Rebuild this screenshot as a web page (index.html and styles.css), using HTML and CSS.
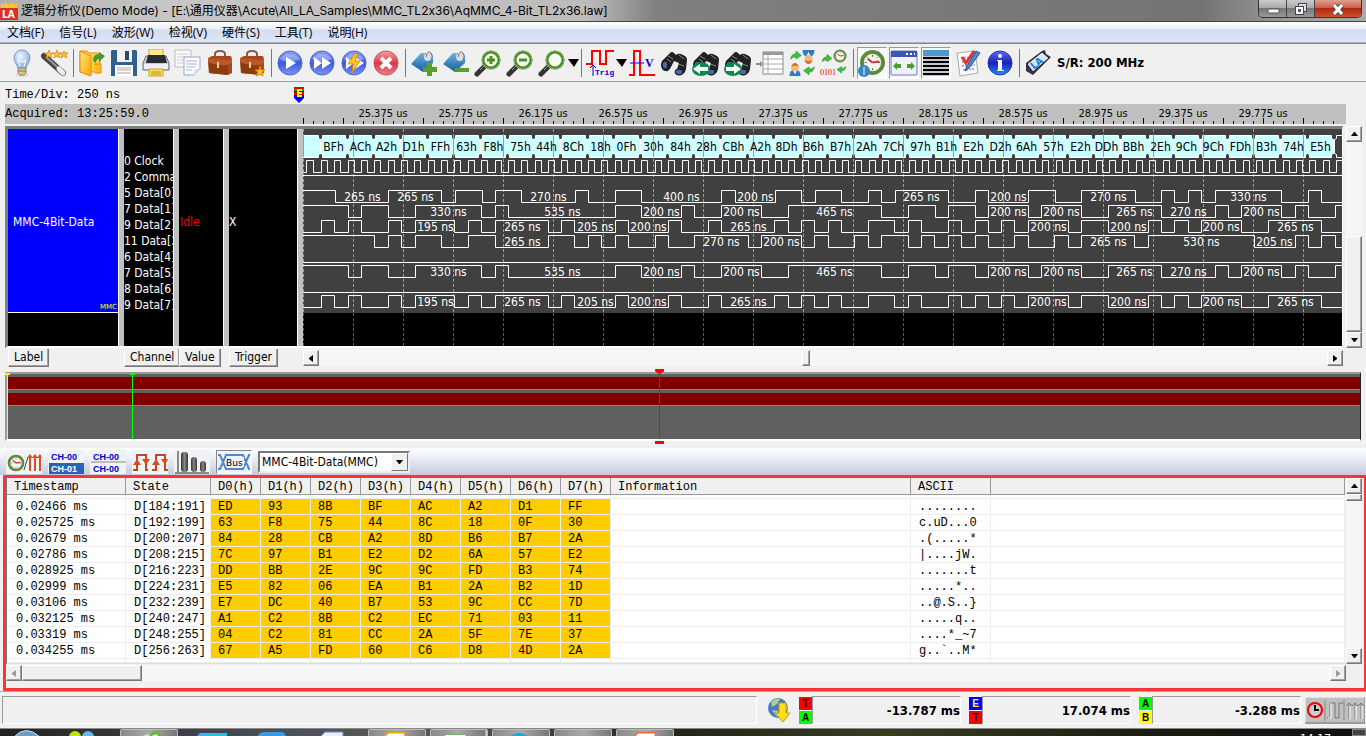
FILE: index.html
```html
<!DOCTYPE html>
<html lang="zh-CN">
<head>
<meta charset="utf-8">
<title>逻辑分析仪(Demo Mode)</title>
<link rel="stylesheet" href="styles.css">
</head>
<body>
<svg class="defs" aria-hidden="true">
  <defs>
    <linearGradient id="gBlue" x1="0" y1="0" x2="0" y2="1"><stop offset="0" stop-color="#8fa6f0"/><stop offset=".5" stop-color="#3b5be0"/><stop offset="1" stop-color="#7d95f5"/></linearGradient>
    <linearGradient id="gRed" x1="0" y1="0" x2="0" y2="1"><stop offset="0" stop-color="#f0a0a0"/><stop offset=".5" stop-color="#dc3a48"/><stop offset="1" stop-color="#ee7f88"/></linearGradient>
    <linearGradient id="gInfo" x1="0" y1="0" x2="0" y2="1"><stop offset="0" stop-color="#5a6cf0"/><stop offset=".5" stop-color="#1a22b8"/><stop offset="1" stop-color="#2a8cf0"/></linearGradient>
    <linearGradient id="gTag" x1="0" y1="0" x2="0" y2="1"><stop offset="0" stop-color="#6cb2e4"/><stop offset="1" stop-color="#145c9c"/></linearGradient>
    <linearGradient id="gGold" x1="0" y1="0" x2="1" y2="1"><stop offset="0" stop-color="#ffe680"/><stop offset="1" stop-color="#f5a800"/></linearGradient>
    <linearGradient id="gBar" x1="0" y1="0" x2="1" y2="0"><stop offset="0" stop-color="#333"/><stop offset=".5" stop-color="#888"/><stop offset="1" stop-color="#333"/></linearGradient>
    <radialGradient id="gBulb" cx=".4" cy=".35" r=".7"><stop offset="0" stop-color="#f4faff"/><stop offset="1" stop-color="#7fa8dc"/></radialGradient>
    <symbol id="ball" viewBox="0 0 28 28"><circle cx="14" cy="14" r="12" fill="url(#gBlue)" stroke="#4a62d8"/><path d="M4 10a11 8 0 0 1 20 0q-10 5-20 0z" fill="#fff" opacity=".3"/></symbol>
    <symbol id="case" viewBox="0 0 28 28"><path d="M9 8V5q0-3 5-3t5 3v3" fill="none" stroke="#8a5a40" stroke-width="2"/><path d="M2 9l4-2h19l1 3v14l-4 2L3 24z" fill="#a64a1c"/><path d="M2 9l20 2v15L3 24z" fill="#8e3b12"/><path d="M2 9l20 2 4-1v4q-5 3-12 2Q6 15 2 13z" fill="#b85a26"/><path d="M12 13v6" stroke="#f0d0a0" stroke-width="2"/></symbol>
    <symbol id="lens" viewBox="0 0 28 28"><path d="M11 17L3 25" stroke="#333" stroke-width="5" stroke-linecap="round"/><path d="M11 16l-5 5" stroke="#999" stroke-width="1"/><circle cx="17" cy="11" r="8" fill="#f6faf4" stroke="#4d8a2a" stroke-width="3"/><circle cx="17" cy="11" r="9" fill="none" stroke="#88b868" stroke-width="1"/></symbol>
    <symbol id="bino" viewBox="0 0 28 28"><path d="M1 15q0-3 3-5l6-6q2-2 4 0l2 2q2-2 5-1l4 2q2 1 2 4l-1 9q-1 5-5 6-5 1-5-3l2-6 1-3-5-2-3 6q-2 5-6 4-4-1-4-7z" fill="#222"/><path d="M8 7l5 3M19 6l5 4M7 10l4 3M18 15l6 2" stroke="#888" stroke-width="1"/><ellipse cx="5" cy="16" rx="3" ry="4" fill="#4668a8" stroke="#111"/><ellipse cx="19" cy="23" rx="4" ry="3" fill="#4668a8" stroke="#111"/></symbol>
    <symbol id="clock" viewBox="0 0 28 28"><circle cx="14" cy="14" r="11" fill="#f4f4ee" stroke="#5c8a3a" stroke-width="4"/><path d="M14 6v2M14 20v2M6 14h2M20 14h2M8 8l1 1M20 8l-1 1M8 20l1-1" stroke="#555"/><path d="M14 14l-5-4M14 14l7-1" stroke="#c33" stroke-width="2"/></symbol>
    <symbol id="swapA" viewBox="0 0 12 10"><path d="M0 9Q1 3 6 3V0l6 5-6 4V7Q3 6 0 9z" fill="#3cc03c" stroke="#28882a" stroke-width=".6"/></symbol>
    <symbol id="man" viewBox="0 0 12 14"><path d="M0 14q0-7 6-7t6 7z" fill="#3478cc"/><path d="M4 8l2 4 2-4z" fill="#fff"/><circle cx="6" cy="5" r="4" fill="#fbb878"/><path d="M2 4q1-4 4-4t4 4q-4-2-8 0z" fill="#d07820"/></symbol>
  </defs>
</svg>

<header class="titlebar">
  <svg class="logo" viewBox="0 0 18 18"><path d="M1 1l3 2 2-3 3 3 3-3 2 3 3-2v15H1z" fill="#ffc430"/><rect x="0" y="6" width="18" height="12" fill="#d83228"/><text x="2" y="16" class="logo-text">LA</text></svg>
  <h1>逻辑分析仪(Demo Mode) - [E:\通用仪器\Acute\All_LA_Samples\MMC_TL2x36\AqMMC_4-Bit_TL2x36.law]</h1>
  <div class="wincontrols">
    <button aria-label="Minimize"><svg width="14" height="14"><rect x="2" y="7" width="11" height="4" rx="1" fill="#fff" stroke="#555"/></svg></button>
    <button aria-label="Restore"><svg width="14" height="14"><rect x="4.500" y="1.500" width="8" height="8" fill="#ddd" stroke="#445"/><rect x="1.500" y="4.500" width="8" height="8" fill="#fff" stroke="#445"/><rect x="4" y="7" width="3" height="3" fill="#556"/></svg></button>
    <button class="close" aria-label="Close"><svg width="14" height="14"><path d="M3 3l8 9M11 3l-8 9" stroke="#555" stroke-width="5"/><path d="M3 3l8 9M11 3l-8 9" stroke="#fff" stroke-width="3"/></svg></button>
  </div>
</header>

<nav class="menubar"><button>文档(F)</button><button>信号(L)</button><button>波形(W)</button><button>检视(V)</button><button>硬件(S)</button><button>工具(T)</button><button>说明(H)</button></nav>

<div class="toolbar" role="toolbar">
  <button aria-label="Tip"><svg viewBox="0 0 28 28"><ellipse cx="14" cy="26" rx="7" ry="2" fill="#ddd"/><path d="M14 1a8 8 0 0 1 8 8c0 4-3 6-4 10h-8C9 15 6 13 6 9a8 8 0 0 1 8-8z" fill="url(#gBulb)" stroke="#7a9ccc"/><path d="M12 18l-2-7 4 2 4-2-2 7" fill="none" stroke="#fff"/><path d="M10 19h8v5l-2 2h-4l-2-2z" fill="#d8cc80" stroke="#888860"/><path d="M10 22h8" stroke="#777"/></svg></button>
  <button aria-label="Wizard"><svg viewBox="0 0 28 28"><path d="M4 7l19 17" stroke="#444" stroke-width="6" stroke-linecap="round"/><path d="M6 8l17 15" stroke="#999" stroke-width="2"/><path d="M19 20l4 4" stroke="#eee" stroke-width="5" stroke-linecap="round"/><path d="M9 1l1 3 3 0-2 2 1 3-3-2-3 2 1-3-3-2 4 0zM17 1l1 3 3 0-2 2 1 3-3-2-3 2 1-3-2-2 3 0zM24 2l1 2 3 0-2 2 1 3-3-2-3 2 1-3-2-2 3 0z" fill="#ffc820" stroke="#e07818" stroke-width=".7"/></svg></button>
  <span class="sep"></span>
  <button aria-label="Open"><svg viewBox="0 0 28 28"><path d="M2 2h7l2 2h11v19H2z" fill="#ffd040" stroke="#e89010"/><path d="M2 2l11 5v20L2 23z" fill="url(#gGold)" stroke="#e08c10"/><path d="M15 12q0-7 6-7V3l6 4-6 6v-3q-3 0-3 4z" fill="#489438"/><path d="M16 15h7v9h-6" fill="#ffb820" stroke="#e08c10"/></svg></button>
  <button aria-label="Save"><svg viewBox="0 0 28 28"><path d="M2 1h24l1 1v25H1V2z" fill="#315f8e"/><rect x="7" y="1" width="15" height="12" fill="#f0f2f4"/><rect x="15" y="2" width="4" height="9" fill="#244a72"/><rect x="5" y="16" width="18" height="11" fill="#fff"/><path d="M7 19h14M7 21h14M7 24h14" stroke="#aaa"/></svg></button>
  <button aria-label="Print"><svg viewBox="0 0 28 28"><rect x="7" y="0" width="14" height="7" fill="#ffe890" stroke="#c8a030"/><path d="M4 7h20l3 7v7H1v-7z" fill="#c8ccd4" stroke="#6a7078"/><path d="M6 6h17l2 8H4z" fill="#2c2c30"/><path d="M2 15h24v5H2z" fill="#eef"/><path d="M7 20h14v7H7z" fill="#ffe060" stroke="#d0a020"/><path d="M9 23h10M9 25h10" stroke="#b89020"/></svg></button>
  <button aria-label="Copy"><svg viewBox="0 0 28 28"><path d="M1 1h16v17H1z" fill="#fafafa" stroke="#bbb"/><path d="M3 5h12M3 8h12M3 11h12M3 14h12" stroke="#ccc"/><path d="M10 8h16v12l-6 6H10z" fill="#fbfcff" stroke="#9aa6c4"/><path d="M12 12h11M12 15h11M12 18h9M12 21h6" stroke="#a8b4d4"/><path d="M20 26l1-6h5z" fill="#dde"/></svg></button>
  <button aria-label="Project"><svg><use href="#case"/></svg></button>
  <button aria-label="New project"><svg viewBox="0 0 28 28"><use href="#case"/><path d="M22 17l1 4h4l-3 2 1 4-3-2-4 2 2-4-3-2h4z" fill="#ffc820" stroke="#d88810"/></svg></button>
  <span class="sep"></span>
  <button aria-label="Run"><svg viewBox="0 0 28 28"><use href="#ball"/><path d="M10 8l10 6-10 6z" fill="#fff"/></svg></button>
  <button aria-label="Repeat run"><svg viewBox="0 0 28 28"><use href="#ball"/><path d="M6 8l8 6-8 6zM14 8l9 6-9 6z" fill="#fff"/></svg></button>
  <button aria-label="Quick run"><svg viewBox="0 0 28 28"><use href="#ball"/><path d="M6 8l8 6-8 6zM15 8l9 6-9 6z" fill="#fff"/><path d="M15 4l-7 11h5l-1 9 8-12h-5l3-7z" fill="#ffc41c" stroke="#c07800" stroke-width=".7"/></svg></button>
  <button aria-label="Stop"><svg viewBox="0 0 28 28"><circle cx="14" cy="14" r="12" fill="url(#gRed)" stroke="#c85060"/><path d="M9 9l10 10M19 9L9 19" stroke="#fff" stroke-width="4"/></svg></button>
  <span class="sep"></span>
  <button aria-label="Add tag"><svg viewBox="0 0 28 28"><path d="M1 15L11 4h10l2 3v7L13 23z" fill="url(#gTag)"/><circle cx="18" cy="8" r="4" fill="#ddd"/><path d="M16 8q2-8 5-4t-2 9" fill="none" stroke="#778"/><path d="M17 14h5v4h5v5h-5v4h-5v-4h-4v-5h4z" fill="#58a028"/></svg></button>
  <button aria-label="Remove tag"><svg viewBox="0 0 28 28"><path d="M1 15L11 4h10l2 3v7L13 23z" fill="url(#gTag)"/><circle cx="18" cy="8" r="4" fill="#ddd"/><path d="M16 8q2-8 5-4t-2 9" fill="none" stroke="#778"/><path d="M13 19h14v4H13z" fill="#58a028"/></svg></button>
  <button aria-label="Zoom in"><svg viewBox="0 0 28 28"><use href="#lens"/><path d="M13 11h8M17 7v8" stroke="#4d9020" stroke-width="3"/></svg></button>
  <button aria-label="Zoom out"><svg viewBox="0 0 28 28"><use href="#lens"/><path d="M13 11h8" stroke="#4d9020" stroke-width="3"/></svg></button>
  <button aria-label="Zoom"><svg viewBox="0 0 28 28"><use href="#lens"/></svg></button>
  <button class="drop" aria-label="Zoom options"><svg viewBox="0 0 11 8"><path d="M0 0h11L6 8z"/></svg></button>
  <span class="sep"></span>
  <button aria-label="Trigger"><svg viewBox="0 0 28 28"><path d="M0 15h6V2h8v13h6V2h8" fill="none" stroke="#f00" stroke-width="2"/><path d="M7 27V16M4 19l3-3 3 3" fill="none" stroke="#00d" stroke-width="1"/><text x="9" y="26" class="trig">Trig</text></svg></button>
  <button class="drop" aria-label="Trigger options"><svg viewBox="0 0 11 8"><path d="M0 0h11L6 8z"/></svg></button>
  <button aria-label="Voltage"><svg viewBox="0 0 28 28"><path d="M1 26h5V2h6v24h15" fill="none" stroke="#f00" stroke-width="2"/><path d="M2 14h14" stroke="#00e" stroke-width="1"/><text x="17" y="18" class="volt">V</text></svg></button>
  <button aria-label="Find"><svg><use href="#bino"/></svg></button>
  <button aria-label="Find previous"><svg viewBox="0 0 28 28"><use href="#bino"/><ellipse cx="9" cy="20" rx="9" ry="7" fill="#0a8a4c"/><path d="M1 20l7-5v3h8v4H8v3z" fill="#fff"/></svg></button>
  <button aria-label="Find next"><svg viewBox="0 0 28 28"><use href="#bino"/><ellipse cx="9" cy="20" rx="9" ry="7" fill="#0a8a4c"/><path d="M17 20l-7-5v3H2v4h8v3z" fill="#fff"/></svg></button>
  <button aria-label="Report list"><svg viewBox="0 0 28 28"><rect x="7" y="3" width="20" height="22" fill="#fff" stroke="#888"/><rect x="7" y="3" width="20" height="3" fill="#999"/><path d="M12 6v19M7 10h20M7 15h20M7 20h20" stroke="#aaa" stroke-width="1"/><path d="M0 14h4v-2l3 3-3 3v-2H0z" fill="#888"/></svg></button>
  <button aria-label="Swap channels"><svg viewBox="0 0 28 28"><use href="#man" x="14" y="1" width="13" height="14" transform="rotate(180 20.500 8)"/><use href="#man" x="1" y="14" width="12" height="13"/><use href="#swapA" x="2" y="2" width="12" height="9"/><use href="#swapA" x="15" y="18" width="12" height="9" transform="rotate(180 21 22)"/></svg></button>
  <button aria-label="Swap data"><svg viewBox="0 0 28 28"><use href="#clock" x="13" y="0" width="14" height="14"/><use href="#swapA" x="2" y="5" width="10" height="9"/><use href="#swapA" x="18" y="17" width="9" height="9" transform="rotate(180 22 21)"/><text x="0" y="26" class="bits">0101</text></svg></button>
  <span class="sep"></span>
  <button class="pressed" aria-label="Clock"><svg viewBox="0 0 28 28"><use href="#clock" x="1" y="0" width="27" height="27"/><circle cx="6" cy="22" r="6" fill="#3488c8"/><path d="M6 18v8" stroke="#fff"/></svg></button>
  <button class="pressed" aria-label="Fit window"><svg viewBox="0 0 28 28"><rect x="1" y="2" width="26" height="24" rx="1" fill="#eef0fa" stroke="#6878c8"/><path d="M1 2h26v6H1z" fill="#3c55b8"/><path d="M16 5h2M20 5h2M24 5h1" stroke="#fff" stroke-width="2"/><path d="M3 17l4-4v2h4v4H7v2zM25 17l-4-4v2h-4v4h4v2z" fill="#4c9c30"/></svg></button>
  <button class="pressed" aria-label="Lines"><svg viewBox="0 0 28 28"><rect x="1" y="1" width="26" height="26" fill="#c4c8cc"/><rect x="1" y="1" width="26" height="6" fill="#4d96d0"/><path d="M1 9h26M1 13h26M1 17h26M1 21h26M1 25h26" stroke="#000" stroke-width="2"/></svg></button>
  <button aria-label="Check list"><svg viewBox="0 0 28 28"><path d="M3 4l18-2 3 22-18 3z" fill="#fafafa" stroke="#aaa"/><path d="M7 9l13-1M8 13l12-1M8 17l13-1M9 21l12-1" stroke="#aac" stroke-width="2" stroke-dasharray="2 1"/><path d="M8 8l4 6 8-12" fill="none" stroke="#e03434" stroke-width="3"/><path d="M22 2L13 17l-2 5 4-3L26 4z" fill="#4a8cd0" stroke="#245090"/></svg></button>
  <button aria-label="About"><svg viewBox="0 0 28 28"><circle cx="14" cy="14" r="12" fill="url(#gInfo)" stroke="#2634b0"/><circle cx="14" cy="7" r="2" fill="#fff"/><path d="M11 11h5v10h2v1h-7v-1h1v-9h-1z" fill="#fff"/></svg></button>
  <span class="sep"></span>
  <svg class="device" viewBox="0 0 28 28"><path d="M2 14L18 2l3-1 1 4 5 3L9 26l-7-4z" fill="#334"/><path d="M3 15L18 3l7 6L9 23z" fill="#d4e8fa" stroke="#223"/><text x="6" y="18" class="la" transform="rotate(-38 12 14)">LA</text></svg>
  <strong class="rate">S/R: 200 MHz</strong>
</div>

<main>
  <section class="timehead">
    <p class="timediv">Time/Div: 250 ns
      <svg class="flag" viewBox="0 0 12 16"><path d="M1 0h10v11l-5 5-5-5z" fill="#00f"/><path d="M1 0h10v2H1z" fill="#e00"/><path d="M1 2h10v2H1z" fill="#0a0"/><path d="M1 5h10v3H1z" fill="#e00"/><path d="M4 2h5v2H6v1h3v2H6v1h3v2H4z" fill="#ff0"/></svg>
    </p>
    <div class="ruler"><span>Acquired: 13:25:59.0</span><svg id="ruler"></svg></div>
  </section>

  <section class="viewer">
    <div class="panel">
      <div class="col label"><span>MMC-4Bit-Data</span><small>MMC</small></div>
      <div class="col channel"><ul><li>0 Clock</li><li>2 Command</li><li>5 Data[0]</li><li>7 Data[1]</li><li>9 Data[2]</li><li>11 Data[3]</li><li>6 Data[4]</li><li>7 Data[5]</li><li>8 Data[6]</li><li>9 Data[7]</li></ul></div>
      <div class="col value">Idle</div>
      <div class="col trigger">X</div>
      <svg id="wave"></svg>
    </div>
    <div class="scroll vertical">
      <button aria-label="Scroll up"><svg viewBox="0 0 7 4"><path d="M0 4h7L4 0H3z"/></svg></button><span class="track lead"></span><span class="thumb tall"></span>
      <button aria-label="Scroll down"><svg viewBox="0 0 7 4"><path d="M0 0h7L4 4H3z"/></svg></button>
    </div>
  </section>

  <section class="footer-row">
    <button>Label</button><button>Channel</button><button>Value</button><button>Trigger</button>
    <div class="scroll horizontal">
      <button aria-label="Scroll left"><svg viewBox="0 0 4 7"><path d="M4 0v7L0 4V3z"/></svg></button><span class="track"></span><span class="thumb small"></span><span class="track after"></span>
      <button aria-label="Scroll right"><svg viewBox="0 0 4 7"><path d="M0 0v7L4 4V3z"/></svg></button>
    </div>
  </section>

  <section class="overview">
    <div class="strip"></div><div class="strip"></div>
    <i class="cursor yellow"></i><i class="cursor green"></i><i class="cursor red"></i>
  </section>
</main>

<div class="bustools" role="toolbar">
  <button aria-label="Sample clock"><svg width="36" height="24"><use href="#clock" x="1" y="4" width="18" height="18"/><path d="M18 20l4-13" stroke="#444"/><path d="M24 21V5M29 21V5M34 21V5" stroke="#d85020" stroke-width="2"/><path d="M21 8l3-4 3 4zM26 8l3-4 3 4zM31 8l3-4 2 4z" fill="#d85020"/></svg></button>
  <button aria-label="Channel compare"><svg width="36" height="24"><rect x="1" y="13" width="35" height="11" fill="#2c62b4"/><text x="3" y="10" class="ch">CH-00</text><text x="3" y="22" class="ch inv">CH-01</text></svg></button>
  <button aria-label="Channel pair"><svg width="36" height="24"><path d="M1 12h35" stroke="#888"/><text x="3" y="10" class="ch">CH-00</text><text x="3" y="22" class="ch">CH-00</text></svg></button>
  <button aria-label="Edges"><svg width="36" height="24"><path d="M1 20h4V5h9v15h2M20 20h4V5h9v15h3" fill="none" stroke="#c84420" stroke-width="2"/><path d="M1 15l4-6 4 6zM10 9l4 6 4-6zM20 15l4-6 4 6zM29 9l4 6 3-6z" fill="#d84c24"/></svg></button>
  <button aria-label="Statistics"><svg width="36" height="24"><path d="M4 1v22M1 23h34" stroke="#888" stroke-width="2"/><rect x="7" y="2" width="7" height="20" rx="3" fill="url(#gBar)"/><rect x="17" y="7" width="6" height="15" rx="3" fill="url(#gBar)"/><rect x="26" y="11" width="6" height="11" rx="3" fill="url(#gBar)"/></svg></button>
  <button class="on" aria-label="Bus"><svg width="34" height="22"><path d="M1 4h2l6 14h17l6-14h1M1 18h2L9 4h17l6 14h1" fill="none" stroke="#4c88d0" stroke-width="2"/><rect x="9" y="6" width="18" height="10" fill="#f0f2f6"/><text x="9" y="15" class="bus">Bus</text></svg></button>
  <label class="combo"><select aria-label="Bus source"><option>MMC-4Bit-Data(MMC)</option></select><span><svg viewBox="0 0 7 4"><path d="M0 0h7L4 4H3z"/></svg></span></label>
</div>

<section class="report">
  <div class="report-main">
    <div class="tablewrap">
      <table>
        <colgroup><col class="w119"><col class="w85"><col class="w50"><col class="w50"><col class="w50"><col class="w50"><col class="w50"><col class="w50"><col class="w50"><col class="w50"><col class="w300"><col class="w80"><col></colgroup>
        <thead><tr><th>Timestamp</th><th>State</th><th>D0(h)</th><th>D1(h)</th><th>D2(h)</th><th>D3(h)</th><th>D4(h)</th><th>D5(h)</th><th>D6(h)</th><th>D7(h)</th><th>Information</th><th>ASCII</th><th></th></tr></thead>
        <tbody id="rows"></tbody>
      </table>
    </div>
    <div class="scroll vertical">
      <button aria-label="Scroll up"><svg viewBox="0 0 7 4"><path d="M0 4h7L4 0H3z"/></svg></button><span class="thumb tiny"></span><span class="track"></span>
      <button aria-label="Scroll down"><svg viewBox="0 0 7 4"><path d="M0 0h7L4 4H3z"/></svg></button>
    </div>
  </div>
  <div class="scroll horizontal off">
    <button aria-label="Scroll left"><svg viewBox="0 0 4 7"><path d="M4 0v7L0 4V3z"/></svg></button><span class="thumb wide"></span><span class="track"></span>
    <button aria-label="Scroll right"><svg viewBox="0 0 4 7"><path d="M0 0v7L4 4V3z"/></svg></button>
  </div>
</section>

<footer class="status">
  <div class="pane grow"></div>
  <svg class="globe" viewBox="0 0 24 26"><circle cx="10" cy="11" r="10" fill="#4a78c8"/><path d="M3 5q5-5 9-3l-3 5-5 3zM12 6q6-1 8 5l-5 6zM4 13l6 1-1 6z" fill="#a8d488"/><path d="M11 6h7v10h4l-7 9-8-9h4z" fill="#ffdf18" stroke="#c89810"/></svg>
  <div class="tags"><b class="r">T</b><b class="g">A</b></div><div class="pane num">-13.787 ms</div>
  <div class="tags"><b class="b">E</b><b class="r">T</b></div><div class="pane num">17.074 ms</div>
  <div class="tags"><b class="g">A</b><b class="y">B</b></div><div class="pane num">-3.288 ms</div>
  <svg class="modes" viewBox="0 0 60 27"><path d="M0 0h60v27H0z" fill="#c0c0c0"/><path d="M0 27V0h60" fill="none" stroke="#fff"/><path d="M0 26h60V0" fill="none" stroke="#777"/><circle cx="10" cy="13" r="7" fill="#ccc" stroke="#e00" stroke-width="2"/><path d="M10 8v5h4" fill="none" stroke="#000" stroke-width="2"/><path d="M20 3v21M39 3v21" stroke="#888"/><path d="M22 21h3V6h5v15h4V6h4" fill="none" stroke="#777"/><path d="M23 21h3V6" fill="none" stroke="#fff"/><path d="M44 22V7M50 22V7M56 22V7M41 9l3-3 3 3 3-3 3 3 3-3 3 3" fill="none" stroke="#777"/><path d="M45 22V9M51 22V9M57 22V9" stroke="#fff"/></svg>
</footer>

<div class="taskbar">
  <svg class="orb" viewBox="0 0 32 8"><path d="M2 8Q14-5 28 8z" fill="#6ca0c0" stroke="#cde"/></svg>
  <svg class="task plain" viewBox="0 0 58 8"><circle cx="17" cy="8" r="6" fill="#c4e000"/><circle cx="30" cy="8" r="6" fill="#6cb4e8"/></svg>
  <svg class="task lit" viewBox="0 0 58 8"><path d="M19 8q6-4 20-4v4z" fill="#ddd"/><path d="M30 7q6-7 12-1" fill="none" stroke="#5cc030" stroke-width="3"/></svg>
  <svg class="task plain" viewBox="0 0 58 8"><path d="M14 8l4-4h27v4z" fill="#30b8f0"/></svg>
  <svg class="task plain" viewBox="0 0 58 8"><path d="M13 8q2-5 8-5h16q4 0 5 5z" fill="#3c98e8"/></svg>
  <svg class="task plain" viewBox="0 0 58 8"><path d="M14 8l5-5h18v5z" fill="#eef" stroke="#6888c0"/></svg>
  <svg class="task lit" viewBox="0 0 54 8"><path d="M12 8l5-5h19v5z" fill="#fff" stroke="#f0a000" stroke-width="2"/></svg>
  <svg class="task lit dbl" viewBox="0 0 54 8"><path d="M12 8V5h24v3z" fill="#fff" stroke="#68a858"/></svg>
  <svg class="task lit" viewBox="0 0 54 8"><path d="M14 8q8-8 20-2v2z" fill="#18a8e0"/></svg>
  <svg class="task lit" viewBox="0 0 54 8"><path d="M21 8V7h14v1z" fill="#d8b060"/></svg>
  <svg class="task lit" viewBox="0 0 54 8"><path d="M14 8l5-5h20v5z" fill="#fff" stroke="#e87040" stroke-width="2"/></svg>
  <span class="tray"></span><time>14:17</time><span class="peek"></span>
</div>
<script src="app.js"></script>
</body>
</html>
```

FILE: styles.css
```css
:root {
  --ui: "DejaVu Sans Condensed", "Noto Sans", "Noto Sans CJK SC", sans-serif;
  --cn: "Open Sans", "Noto Sans CJK SC", sans-serif;
  --mono: "Liberation Mono", "Courier New", monospace;
  --face: #f0f0f0;
}
* { box-sizing: border-box; }
body { margin: 0; height: 100vh; overflow: hidden; display: flex; flex-direction: column; background: var(--face); font: 12px/16px var(--ui); color: #000; }
button { font: inherit; color: inherit; padding: 0; border: 0; background: none; }
h1, p, ul { margin: 0; padding: 0; }
svg { display: block; }
.defs { position: absolute; width: 0; height: 0; }

.titlebar { flex: none; height: 22px; display: flex; align-items: center; border-bottom: 1px solid #444; background: linear-gradient(90deg, #b0b0b0, #c6c6c6 12%, #bcbcbc 43%, #808080 48%, #747474 88%, #999 94%, #aaa); }
.logo { width: 18px; height: 18px; }
.logo-text { font: bold 10px var(--ui); fill: #fff; }
.titlebar h1 { flex: 1; padding-left: 3px; font: 12px/20px Inter, "Noto Sans CJK SC", sans-serif; font-feature-settings: "calt" 0; white-space: nowrap; }
.wincontrols { align-self: flex-start; display: flex; height: 18px; margin-right: 4px; border: 1px solid #333; border-top: 0; border-radius: 0 0 5px 5px; overflow: hidden; }
.wincontrols button { width: 28px; display: grid; place-items: center; background: linear-gradient(#ccc, #aaa 45%, #777 50%, #999); border-right: 1px solid #444; }
.wincontrols .close { width: 46px; border: 0; background: linear-gradient(#e0a090, #cc6048 45%, #b02810 50%, #d05030); }

.menubar { flex: none; height: 21px; display: flex; gap: 15px; padding-left: 7px; border-bottom: 1px solid #a8b0c4; background: linear-gradient(#fff, #e8edf8 35%, #d5dcf0 40%, #dfe6f8); font: 12px/19px var(--cn); }

.toolbar { flex: none; height: 39px; display: flex; align-items: center; padding-left: 6px; border-top: 1px solid #888; border-bottom: 1px solid #999; }
.toolbar button { width: 32px; height: 32px; display: grid; place-items: center; }
.toolbar button svg, .device { width: 28px; height: 28px; }
.device { margin: 0 2px; }
.toolbar .drop { width: 10px; }
.toolbar .drop svg { width: 11px; height: 8px; }
.sep { width: 6px; height: 28px; display: flex; justify-content: center; }
.sep::before { content: ""; width: 1px; background: #777; }
.toolbar .pressed { width: 30px; margin: 0 1px; border: 1px solid #999; border-right-color: #fff; border-bottom-color: #fff; background: #f8f8f8; }
.rate { padding-left: 3px; font-size: 13px; }
.trig { font: bold 8px var(--mono); fill: #00d; }
.volt { font: bold 12px "Liberation Serif", serif; fill: #00d; }
.bits { font: 8px "Liberation Serif", serif; fill: #e00; }
.la { font: bold 10px var(--ui); fill: #1478d8; }

.timehead { font: 12px/16px var(--mono); padding: 4px 20px 0 5px; }
.timediv { position: relative; height: 18px; line-height: 18px; }
.flag { position: absolute; left: 288px; top: 1px; width: 12px; height: 16px; }
.ruler { display: flex; height: 20px; background: #c0c0c0; line-height: 20px; white-space: nowrap; }
.ruler span { flex: none; width: 298px; }
.ruler svg { flex: 1; min-width: 0; height: 20px; font: 11px var(--ui); }

.viewer { display: flex; gap: 3px; margin: 2px 4px 0 5px; height: 222px; }
.panel { flex: 1; min-width: 0; display: grid; grid-template-columns: 116px 55px 50px 74px 1fr; border: solid; border-width: 3px 1px 2px 3px; border-color: #808080 #fff #fff #808080; background: #000; color: #fff; }
.col { border-right: 5px solid #c0c0c0; box-shadow: inset -1px 0 #fff; overflow: hidden; min-width: 0; white-space: nowrap; }
.label { display: grid; align-content: start; }
.label span, .label small { grid-area: 1 / 1; height: 184px; }
.label span { padding-left: 5px; line-height: 186px; background: #00f; border-bottom: 1px solid #fff; margin-right: 1px; }
.label small { display: grid; place-content: end; padding: 0 2px 2px 0; font: 7px/7px "DejaVu Sans", sans-serif; color: #ff0; }
.channel ul { list-style: none; padding-top: 24px; margin-right: 1px; overflow: hidden; }
.value { line-height: 186px; padding-left: 1px; color: #e00; }
.trigger { line-height: 186px; }
#wave { width: 100%; height: 100%; min-width: 0; }
#wave .gray { fill: #404040; }
#wave .sig { fill: none; stroke: #fff; }
#wave .cell { fill: #cff; stroke: #fff; }
#wave text { text-anchor: middle; fill: #fff; }
#wave .bustext { fill: #000; }
#wave .grid { stroke-dasharray: 3 2; stroke: #48c0c0; }
#wave .grid.oncell { stroke: #d88080; }
#wave .grid.onblack { stroke: #008080; }
#ruler text { text-anchor: middle; }

.scroll { display: flex; }
.scroll.vertical { flex: none; width: 16px; flex-direction: column; }
.scroll.horizontal { height: 16px; min-width: 0; }
.scroll button { flex: none; width: 16px; height: 16px; display: grid; place-items: center; }
.scroll button, .thumb, .footer-row > button { background: var(--face); border: 1px solid; border-color: #fff #777 #777 #fff; box-shadow: -1px -1px #a0a0a0 inset; }
.scroll svg { width: 7px; height: 4px; }
.scroll.horizontal svg { width: 4px; height: 7px; }
.track { flex: 1; background: repeating-conic-gradient(#fff 0 25%, #eee 0 50%) 0 0 / 2px 2px; }
.track.lead { flex: none; height: 94px; }
.thumb { flex: none; }
.thumb.tall { flex: 1; }
.thumb.small { width: 8px; }
.thumb.tiny { height: 7px; }
.thumb.wide { width: 120px; }
.track.after { flex: 1.07; }
.scroll.off svg { fill: #999; }

.footer-row { display: grid; grid-template-columns: 116px 55px 50px 74px 1fr; align-items: center; height: 20px; padding: 0 23px 0 8px; }
.footer-row > button { justify-self: start; height: 18px; padding: 0 5px; border-top: 0; line-height: 17px; }

.overview { position: relative; display: flow-root; height: 69px; margin: 4px 5px 0; border: solid; border-width: 2px 1px 2px 2px; border-color: #999 #222 #fff #999; background: #606060; }
.strip { height: 13px; margin-top: 3px; margin-bottom: 2px; background: #800000; border-bottom: 1px solid #e06060; }
.cursor { position: absolute; top: -1px; bottom: 0; width: 1px; }
.cursor::before { content: ""; position: absolute; top: 0; left: -2px; width: 5px; height: 2px; background: inherit; }
.yellow { left: 0; background: #ff0; }
.green { left: 125px; background: #0f0; }
.red { left: 48.2%; background: #f00; }
.red::before { top: -4px; left: -4px; width: 9px; height: 5px; clip-path: polygon(0 0, 100% 0, 100% 50%, 55% 100%, 45% 100%, 0 50%); }
.red::after { content: ""; position: absolute; bottom: -5px; left: -4px; width: 9px; height: 3px; background: #f00; }

.bustools { flex: none; display: flex; align-items: center; gap: 6px; height: 27px; margin-top: 7px; padding-left: 6px; background: linear-gradient(#fcfdff, #eceff6 35%, #c4cae0); }
.bustools button { width: 36px; height: 24px; background: #f0f2f6; display: grid; place-items: center; }
.bustools .on { border: 1px solid #888; border-right-color: #fff; border-bottom-color: #fff; }
.ch { font: bold 9px "Liberation Sans", sans-serif; fill: #0000d8; }
.ch.inv { fill: #fff; }
.bus { font: 9px "DejaVu Sans", sans-serif; }
.combo { display: flex; width: 152px; height: 22px; border: 2px solid; border-color: #777 #eee #eee #777; background: #fff; }
.combo select { flex: 1; min-width: 0; appearance: none; border: 0; padding: 0 0 0 2px; background: none; font: inherit; color: #000; }
.combo span { width: 17px; display: grid; place-items: center; background: var(--face); border: 1px solid; border-color: #fff #777 #777 #fff; }
.combo svg { width: 7px; height: 4px; }

.report { flex: none; height: 216px; margin-left: 3px; border: 3px solid #f33; border-right-width: 2px; padding-right: 2px; }
.report-main { display: flex; gap: 1px; height: 186px; }
.tablewrap { flex: 1; min-width: 0; overflow: hidden; background: #fff; border-left: 1px solid #777; border-bottom: 1px solid #ddd; }
table { width: 100%; table-layout: fixed; border-collapse: separate; border-spacing: 0; font: 12px/14px var(--mono); }
.w119 { width: 119px; } .w85 { width: 85px; } .w50 { width: 50px; } .w300 { width: 300px; } .w80 { width: 80px; }
th { height: 17px; padding: 2px 0 0 7px; text-align: left; font-weight: normal; background: var(--face); border-right: 1px solid #999; border-bottom: 1px solid #999; }
td { height: 16px; padding: 1px 0 0 8px; border-right: 1px solid #eee; border-bottom: 1px solid #eee; white-space: nowrap; }
.gap td { height: 4px; }
td:first-child { padding-left: 9px; }
td.hex { padding-left: 7px; background: #fc0; }
.report > .horizontal { margin: 1px 16px 0 0; }

.status { flex: none; display: flex; align-items: center; height: 37px; padding: 0 1px 0 2px; border-top: 1px solid #aaa; }
.pane { height: 28px; border: 1px solid; border-color: #999 #fff #fff #999; }
.grow { flex: 1; }
.globe { width: 24px; height: 26px; margin: 0 7px 0 11px; }
.tags { width: 13px; display: grid; gap: 1px; }
.tags b { height: 13px; font: bold 10px/13px "Liberation Sans", sans-serif; text-align: center; }
.r { background: #f00; } .g { background: #0f0; } .y { background: #ff0; } .b { background: #00f; color: #ff0; }
.num { width: 149px; margin-right: 8px; font-weight: bold; font-size: 13px; line-height: 28px; text-align: right; }
.modes { width: 60px; height: 27px; margin-left: -4px; }

.taskbar { flex: 1; min-height: 8px; display: flex; overflow: hidden; border-top: 1px solid #888; background: linear-gradient(90deg, #222, #4a5058 20%, #585858 30%, #22261a 50%, #3a3c20 65%, #1a1a12 85%, #111); }
.taskbar svg { height: 8px; flex: none; }
.orb { width: 32px; margin: 0 14px 0 12px; }
.task { width: 58px; margin-right: 4px; }
.lit { border: 1px solid #bbb; border-bottom: 0; border-radius: 2px 2px 0 0; background: linear-gradient(90deg, #888, #aaa 50%, #777); }
.dbl { border-right-width: 3px; }
.tray { flex: 1; }
.taskbar time { width: 52px; color: #fff; line-height: 20px; }
.peek { width: 14px; border: 1px solid #888; background: #444; }
```

FILE: app.js
```js
const NS = 'http://www.w3.org/2000/svg';
function add(parent, name, attrs, text) {
  const el = document.createElementNS(NS, name);
  for (const k in attrs) el.setAttribute(k, attrs[k]);
  if (text) el.textContent = text;
  parent.appendChild(el);
  return el;
}

// Ruler: a tick every 10px, a long one every 40px, a label every 80px
const ruler = document.getElementById('ruler');
let ticks = '';
for (let i = 0; i <= 103; i++) ticks += `M${i * 10 + 0.5} 20v${i % 4 ? -3 : -6}`;
add(ruler, 'path', { d: ticks, stroke: '#000' });
for (let i = 0; i < 12; i++) add(ruler, 'text', { x: 80 + i * 80, y: 13 }, (25.375 + i * 0.4).toFixed(3) + ' us');

// Waveforms: edge times in thirds of a pixel
const ORIGIN = 9, END = 3126;
const px = t => Math.floor((t - ORIGIN) / 3) + 0.5;
const wave = document.getElementById('wave');
add(wave, 'rect', { class: 'gray', width: '100%', height: 184 });

const bytes = 'BF AC A2 D1 FF 63 F8 75 44 8C 18 0F 30 84 28 CB A2 8D B6 B7 2A 7C 97 B1 E2 D2 6A 57 E2 DD BB 2E 9C 9C FD B3 74 E5'.split(' ');
const cellAt = k => Math.floor(17.5 + k * 26.67) + 0.5;
function cell(a, b, cls) {
  add(wave, 'path', { class: cls, d: `M${a} 10.5L${a + 2} 9.5V6.5H${b - 2}V9.5L${b} 10.5V24.5L${b - 2} 25.5V28.5H${a + 2}V25.5L${a} 24.5z` });
}
cell(-4.5, cellAt(0), 'cell');
bytes.forEach((b, k) => cell(cellAt(k), cellAt(k + 1), 'cell'));
cell(cellAt(38) + 1, cellAt(39), 'sig');

function gridLine(y1, y2, cls) {
  for (let x = 0; x <= 1000; x += 50) add(wave, 'path', { class: 'grid ' + cls, d: `M${x + 0.5} ${y1}V${y2}` });
}
gridLine(0, 184, '');
gridLine(7, 28, 'oncell');
gridLine(184, 220, 'onblack');
bytes.forEach((b, k) => add(wave, 'text', { class: 'bustext', x: cellAt(k) + 13, y: 22 }, b + 'h'));

function signal(high, start, edges, labels) {
  const hi = high - 129 + 0.5, lo = hi + 12;
  let level = start, d = `M0 ${level ? hi : lo}`;
  edges.forEach(e => { level = !level; d += `H${px(e)}V${level ? hi : lo}`; });
  add(wave, 'path', { class: 'sig', d: d + `H${px(END)}` });
  if (!labels) return;
  for (let i = 1; i < edges.length; i++) {
    const w = edges[i] - edges[i - 1];
    if (w >= 115) add(wave, 'text', { x: px((edges[i] + edges[i - 1]) / 2), y: hi + 10 }, Math.round(w / 3) * 5 + ' ns');
  }
}
const clock = [18, 41];
for (let t = 64; t < END; t += 40.08) clock.push(t, t + 18);
const d0 = [107,266,425,466,547,587,664,826,866,947,1025,1265,1306,1427,1505,1546,1625,1706,1744,1786,1945,2026,2066,2186,2266,2345,2506,2584,2622,2665,2705,2747,2945,3025,3065];
const d1 = [146,185,266,347,545,587,625,947,1025,1145,1183,1265,1385,1465,1744,1826,1906,1945,2026,2066,2186,2225,2345,2425,2584,2747,2785,2825,2945,2986,3025,3107];
const d2 = [64,104,146,185,266,305,347,463,505,545,587,746,785,824,947,986,1105,1145,1226,1265,1424,1466,1505,1544,1586,1625,1706,1783,1826,1865,1945,1985,2026,2066,2105,2143,2186,2305,2345,2425,2546,2584,2623,2665,2705,2825,2906,3065];
const d3 = [223,266,305,347,425,505,587,746,824,866,905,947,986,1066,1105,1183,1346,1385,1505,1544,1586,1663,1706,1744,1826,1865,1903,1945,1985,2026,2066,2143,2186,2263,2305,2345,2503,2546,2863,2986,3025,3065,3105];
signal(160, false, clock, false);
signal(175, true, [], false);
signal(190, true, d0, true);
signal(205, true, d1, true);
signal(220, false, d2, true);
signal(235, true, d3, true);
signal(262, true, [], false);
signal(265, true, d1, true);
signal(292, true, [], false);
signal(295, false, d2, true);

// Decoded packets
const packets = [
  ['0.02466', '184:191', 'ED 93 8B BF AC A2 D1 FF', '........'],
  ['0.025725', '192:199', '63 F8 75 44 8C 18 0F 30', 'c.uD...0'],
  ['0.02679', '200:207', '84 28 CB A2 8D B6 B7 2A', '.(.....*'],
  ['0.02786', '208:215', '7C 97 B1 E2 D2 6A 57 E2', '|....jW.'],
  ['0.028925', '216:223', 'DD BB 2E 9C 9C FD B3 74', '.......t'],
  ['0.02999', '224:231', 'E5 82 06 EA B1 2A B2 1D', '.....*..'],
  ['0.03106', '232:239', 'E7 DC 40 B7 53 9C CC 7D', '..@.S..}'],
  ['0.032125', '240:247', 'A1 C2 8B C2 EC 71 03 11', '.....q..'],
  ['0.03319', '248:255', '04 C2 81 CC 2A 5F 7E 37', '....*_~7'],
  ['0.034255', '256:263', '67 A5 FD 60 C6 D8 4D 2A', 'g..`..M*'],
];
const body = document.getElementById('rows');
function row(cells, cls) {
  const tr = body.insertRow();
  if (cls) tr.className = cls;
  cells.forEach((c, i) => {
    const td = tr.insertCell();
    td.textContent = c;
    if (!cls && i > 1 && i < 10) td.className = 'hex';
  });
}
row(Array(13).fill(''), 'gap');
packets.forEach(([t, s, h, a]) => row([t + ' ms', `D[${s}]`, ...h.split(' '), '', a, '']));
row(Array(13).fill(''), 'gap');
```
